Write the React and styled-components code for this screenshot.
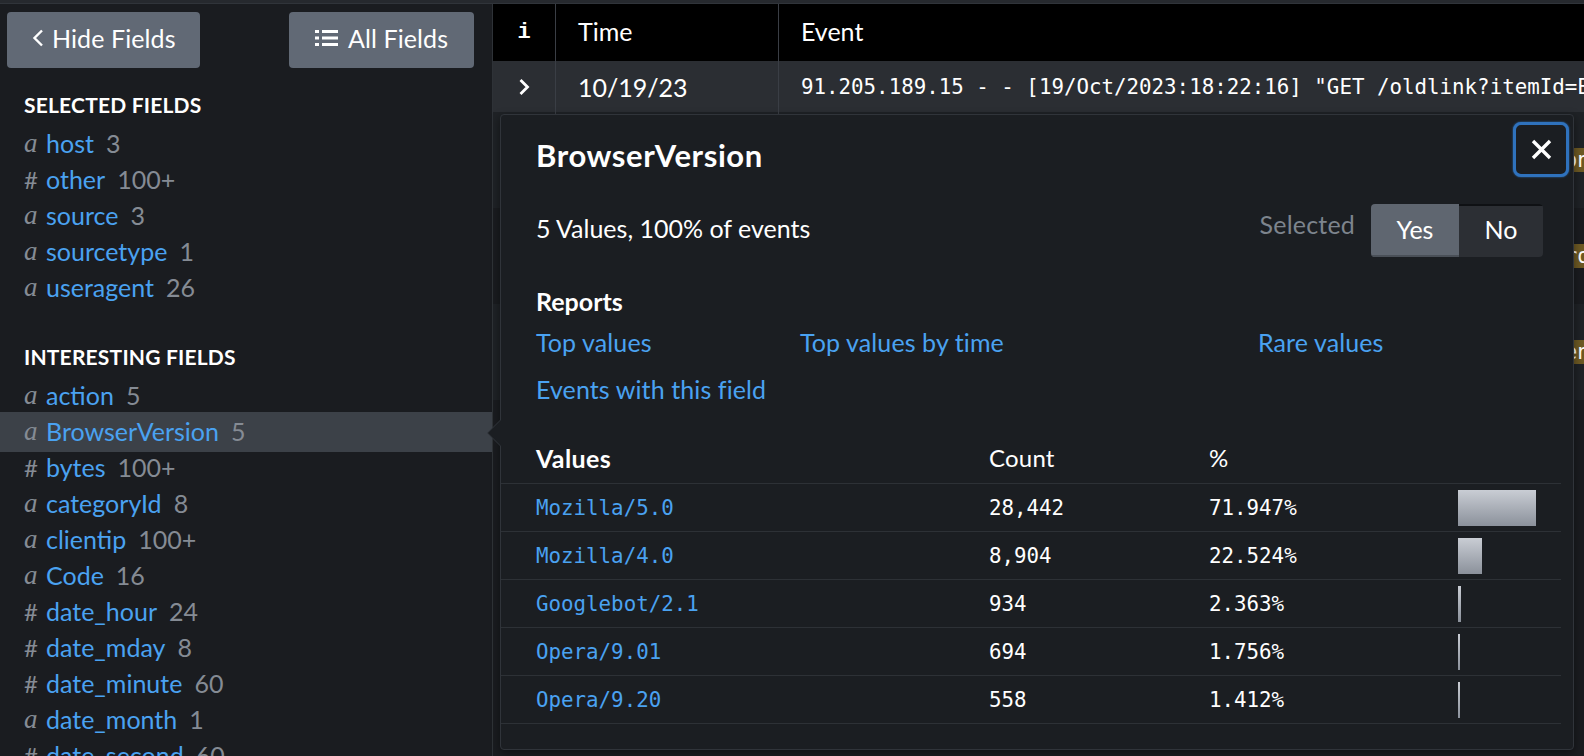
import React from "react";
import styled, { createGlobalStyle, css } from "styled-components";

const SANS = `Lato, "Open Sans", "Noto Sans", sans-serif`;
const MONO = `"DejaVu Sans Mono", "Liberation Mono", monospace`;

const GlobalStyle = createGlobalStyle`
  html, body { margin: 0; padding: 0; background: #1a1c20; }
  body { font-family: ${SANS}; color: #fff; }
  * { box-sizing: border-box; }
`;

const Page = styled.div`
  position: relative;
  width: 1584px;
  height: 756px;
  overflow: hidden;
  display: flex;
  flex-direction: column;
  background: #1a1c20;
`;

const TopStrip = styled.div`
  flex: none;
  height: 4px;
  background: #26292e;
  border-bottom: 1px solid #30343a;
`;

const Body = styled.div`
  flex: 1;
  display: flex;
  min-height: 0;
`;

/* ---------- Sidebar ---------- */
const Sidebar = styled.aside`
  flex: none;
  width: 493px;
  background: #1a1c20;
  border-right: 1px solid #2e3237;
  display: flex;
  flex-direction: column;
  overflow: hidden;
`;

const ButtonRow = styled.div`
  display: flex;
  justify-content: space-between;
  padding: 8px 18px 0 7px;
`;

const SideButton = styled.button`
  display: inline-flex;
  align-items: center;
  gap: ${(p) => p.$gap || 8}px;
  width: ${(p) => p.$w}px;
  height: 56px;
  padding: 0 0 4px ${(p) => p.$pl}px;
  border: none;
  border-radius: 4px;
  background: #616975;
  color: #fff;
  font-family: ${SANS};
  font-size: 25px;
  letter-spacing: 0.1px;
  cursor: pointer;
`;

const SectionHeading = styled.div`
  margin: ${(p) => p.$mt}px 0 8px;
  padding-left: 24px;
  height: 24px;
  line-height: 24px;
  font-size: 21px;
  font-weight: 700;
  letter-spacing: 0.2px;
  color: #fff;
`;

const FieldList = styled.div`
  display: flex;
  flex-direction: column;
`;

const FieldRow = styled.div`
  display: flex;
  align-items: center;
  height: 36px;
  padding-left: 24px;
  white-space: nowrap;
  font-size: 25px;
  ${(p) =>
    p.$active &&
    css`
      height: 40px;
      margin: -1px 0 -3px;
      padding-bottom: 2px;
      background: #3c4148;
    `}
`;

const TypeIcon = styled.span`
  display: inline-block;
  width: 22px;
  flex: none;
  color: #858b94;
  ${(p) =>
    p.$kind === "a"
      ? css`
          font-family: "Liberation Serif", "DejaVu Serif", serif;
          font-style: italic;
          font-size: 27px;
        `
      : css`
          font-family: ${SANS};
          font-size: 24px;
        `}
`;

const FieldName = styled.span`
  color: #4aa2f1;
`;

const FieldCount = styled.span`
  margin-left: 12px;
  color: #858b94;
`;

/* ---------- Main / events table ---------- */
const Main = styled.main`
  flex: 1;
  min-width: 0;
  display: flex;
  flex-direction: column;
  background: #1a1c20;
  overflow: hidden;
`;

const TableGrid = styled.div`
  display: grid;
  grid-template-columns: 63px 223px 1fr;
  flex: none;
  height: ${(p) => p.$h}px;
  background: ${(p) => p.$bg};
`;

const Cell = styled.div`
  display: flex;
  align-items: center;
  min-width: 0;
  overflow: hidden;
  white-space: nowrap;
  padding-left: ${(p) => p.$pl || 0}px;
  padding-bottom: ${(p) => p.$pb || 0}px;
  justify-content: ${(p) => (p.$center ? "center" : "flex-start")};
  border-right: ${(p) => (p.$sep ? "1px solid #3a3e45" : "none")};
  font-size: 25px;
  color: #fff;
`;

const InfoGlyph = styled.span`
  font-family: "Liberation Mono", monospace;
  font-weight: 700;
  font-size: 22px;
`;

const EventText = styled.span`
  font-family: ${MONO};
  font-size: 20.8px;
  color: #fff;
`;

const Hl = styled.span`
  background: #6e5a24;
`;

/* ---------- Popover ---------- */
const Popover = styled.section`
  position: absolute;
  left: 500px;
  top: 114px;
  width: 1074px;
  height: 636px;
  background: #1b1e22;
  border: 1px solid #30343a;
  border-radius: 4px;
  box-shadow: 0 3px 10px rgba(0, 0, 0, 0.45);

  &::before,
  &::after {
    content: "";
    position: absolute;
    top: 304px;
    width: 0;
    height: 0;
    border-style: solid;
  }
  &::before {
    left: -14px;
    border-width: 14px 14px 14px 0;
    border-color: transparent #30343a transparent transparent;
  }
  &::after {
    left: -13px;
    border-width: 14px 14px 14px 0;
    border-color: transparent #1b1e22 transparent transparent;
  }
`;

const PopHeader = styled.header`
  display: flex;
  justify-content: space-between;
  align-items: flex-start;
  padding: 7px 4px 0 35px;
`;

const Title = styled.h2`
  margin: 15px 0 0;
  font-size: 31px;
  line-height: 36px;
  font-weight: 700;
  letter-spacing: 0.6px;
  color: #fff;
`;

const CloseButton = styled.button`
  width: 56px;
  height: 55px;
  display: flex;
  align-items: center;
  justify-content: center;
  background: #1b1e22;
  border: 3px solid #2f72bd;
  border-radius: 8px;
  box-shadow: 0 0 2px #2f72bd;
  padding: 0;
  cursor: pointer;
`;

const SummaryRow = styled.div`
  display: grid;
  grid-template-columns: 722px 1fr;
  align-items: center;
  margin-top: 27px;
  padding: 0 30px 0 35px;
`;

const BodyText = styled.div`
  font-size: 25px;
  color: #fff;
  padding-bottom: 6px;
`;

const SelectedGroup = styled.div`
  display: flex;
  align-items: center;
  justify-content: flex-end;
  gap: 16px;
`;

const MutedLabel = styled.span`
  font-size: 25px;
  letter-spacing: 0.2px;
  color: #7d848d;
  margin-bottom: 14px;
`;

const Toggle = styled.div`
  display: flex;
  height: 53px;
  border-radius: 4px;
  overflow: hidden;
`;

const ToggleOption = styled.button`
  width: ${(p) => p.$w}px;
  height: 100%;
  border: none;
  padding: 0 0 3px;
  font-family: ${SANS};
  font-size: 25px;
  color: #fff;
  cursor: pointer;
  ${(p) =>
    p.$on
      ? css`
          background: #5f6670;
          box-shadow: inset 0 -2px 0 #4a5058;
        `
      : css`
          background: #2c2f34;
          box-shadow: inset 0 2px 0 #0f1114;
        `}
`;

const SubHeading = styled.h3`
  margin: 29px 0 0;
  padding-left: 35px;
  font-size: 25px;
  line-height: 30px;
  font-weight: 700;
  color: #fff;
`;

const LinkGrid = styled.div`
  display: grid;
  grid-template-columns: 264px 458px 1fr;
  grid-auto-rows: 47px;
  align-items: center;
  margin-top: 2px;
  padding-left: 35px;
`;

const Link = styled.a`
  font-size: 25px;
  letter-spacing: 0.1px;
  color: #4aa2f1;
  text-decoration: none;
  cursor: pointer;
`;

const ValuesTable = styled.div`
  margin: 24px 12px 0 0;
`;

const VRow = styled.div`
  display: grid;
  grid-template-columns: 488px 220px 249px 1fr;
  align-items: center;
  height: 48px;
  border-bottom: 1px solid #2d3136;
`;

const VHead = styled.div`
  padding-left: ${(p) => p.$pl || 0}px;
  padding-bottom: 4px;
  font-size: ${(p) => (p.$bold ? 25 : 24)}px;
  font-weight: ${(p) => (p.$bold ? 700 : 400)};
  letter-spacing: ${(p) => (p.$bold ? 0.4 : 0.2)}px;
  color: #fff;
`;

const VCell = styled.div`
  padding-left: ${(p) => p.$pl || 0}px;
  font-family: ${MONO};
  font-size: 20.8px;
  color: ${(p) => (p.$link ? "#4aa2f1" : "#fff")};
`;

const BarCell = styled.div`
  display: flex;
  align-items: center;
  height: 100%;
`;

const Bar = styled.div`
  height: 36px;
  min-width: 1px;
  background: linear-gradient(#c9cdd4, #8b919b);
`;

/* ---------- Icons ---------- */
const ChevronLeft = () => (
  <svg width="12" height="18" viewBox="0 0 12 18">
    <path d="M10 1.5 L2.5 9 L10 16.5" fill="none" stroke="#fff" strokeWidth="2.4" />
  </svg>
);

const ListIcon = () => (
  <svg width="23" height="16" viewBox="0 0 23 16">
    <rect x="0" y="0" width="4" height="3" fill="#fff" />
    <rect x="0" y="6.5" width="4" height="3" fill="#fff" />
    <rect x="0" y="13" width="4" height="3" fill="#fff" />
    <rect x="7" y="0" width="16" height="3" fill="#fff" />
    <rect x="7" y="6.5" width="16" height="3" fill="#fff" />
    <rect x="7" y="13" width="16" height="3" fill="#fff" />
  </svg>
);

const ChevronRight = () => (
  <svg width="12" height="18" viewBox="0 0 12 18">
    <path d="M2.5 2 L9.5 9 L2.5 16" fill="none" stroke="#fff" strokeWidth="2.8" />
  </svg>
);

const CloseIcon = () => (
  <svg width="21" height="21" viewBox="0 0 21 21">
    <path d="M2 2 L19 19 M19 2 L2 19" stroke="#fff" strokeWidth="3.4" />
  </svg>
);

/* ---------- Data ---------- */
const selectedFields = [
  ["a", "host", "3"],
  ["#", "other", "100+"],
  ["a", "source", "3"],
  ["a", "sourcetype", "1"],
  ["a", "useragent", "26"],
];

const interestingFields = [
  ["a", "action", "5"],
  ["a", "BrowserVersion", "5", true],
  ["#", "bytes", "100+"],
  ["a", "categoryId", "8"],
  ["a", "clientip", "100+"],
  ["a", "Code", "16"],
  ["#", "date_hour", "24"],
  ["#", "date_mday", "8"],
  ["#", "date_minute", "60"],
  ["a", "date_month", "1"],
  ["#", "date_second", "60"],
  ["a", "date_wday", "7"],
];

const values = [
  ["Mozilla/5.0", "28,442", 71.947],
  ["Mozilla/4.0", "8,904", 22.524],
  ["Googlebot/2.1", "934", 2.363],
  ["Opera/9.01", "694", 1.756],
  ["Opera/9.20", "558", 1.412],
];

const BAR_TRACK = 108;

const Field = ({ f }) => (
  <FieldRow $active={f[3]}>
    <TypeIcon $kind={f[0]}>{f[0]}</TypeIcon>
    <FieldName>{f[1]}</FieldName>
    <FieldCount>{f[2]}</FieldCount>
  </FieldRow>
);

const extraRows = [
  ["10/19/23", "182.236.164.11 - - [19/Oct/2023:18:22:14] \"POST /cart.do?action=addtocart&itemId=EST-15 HTTP 1.1\" 200 2252"],
  ["10/19/23", "198.35.1.75 - - [19/Oct/2023:18:22:11] \"GET /product.screen?productId=SF-BVS-01 HTTP 1.1\" 404 3125"],
  ["10/19/23", "211.166.11.101 - - [19/Oct/2023:18:22:09] \"GET /category.screen?categoryId=STRATEGY HTTP 1.1\" 200 1410"],
];

export default function App() {
  return (
    <Page>
      <GlobalStyle />
      <TopStrip />
      <Body>
        <Sidebar>
          <ButtonRow>
            <SideButton $w={193} $pl={25} $gap={8}>
              <ChevronLeft />
              Hide Fields
            </SideButton>
            <SideButton $w={185} $pl={26} $gap={10}>
              <ListIcon />
              All Fields
            </SideButton>
          </ButtonRow>

          <SectionHeading $mt={25}>SELECTED FIELDS</SectionHeading>
          <FieldList>
            {selectedFields.map((f) => (
              <Field key={f[1]} f={f} />
            ))}
          </FieldList>

          <SectionHeading $mt={40}>INTERESTING FIELDS</SectionHeading>
          <FieldList>
            {interestingFields.map((f) => (
              <Field key={f[1]} f={f} />
            ))}
          </FieldList>
        </Sidebar>

        <Main>
          <TableGrid $h={57} $bg="#000">
            <Cell $center $sep>
              <InfoGlyph>i</InfoGlyph>
            </Cell>
            <Cell $sep $pl={22} $pb={4}>Time</Cell>
            <Cell $pl={22} $pb={4}>Event</Cell>
          </TableGrid>
          <TableGrid $h={51} $bg="#2b2e33">
            <Cell $center $sep>
              <ChevronRight />
            </Cell>
            <Cell $sep $pl={22}>10/19/23</Cell>
            <Cell $pl={22}>
              <EventText>
                91.205.189.15 - - [19/Oct/2023:18:22:16] "GET /oldlink?itemId=EST-14&amp;JSESSIONID=SD6SL7FF7ADFF53113
              </EventText>
            </Cell>
          </TableGrid>
          {extraRows.map((r, i) => (
            <TableGrid key={i} $h={96} $bg={i % 2 ? "#1a1c20" : "#1f2226"}>
              <Cell $center $sep>
                <ChevronRight />
              </Cell>
              <Cell $sep $pl={22}>{r[0]}</Cell>
              <Cell $pl={22}>
                <EventText>
                  <Hl>{r[1]}</Hl>
                </EventText>
              </Cell>
            </TableGrid>
          ))}
        </Main>
      </Body>

      <Popover>
        <PopHeader>
          <Title>BrowserVersion</Title>
          <CloseButton aria-label="Close">
            <CloseIcon />
          </CloseButton>
        </PopHeader>

        <SummaryRow>
          <BodyText>5 Values, 100% of events</BodyText>
          <SelectedGroup>
            <MutedLabel>Selected</MutedLabel>
            <Toggle>
              <ToggleOption $on $w={88}>Yes</ToggleOption>
              <ToggleOption $w={84}>No</ToggleOption>
            </Toggle>
          </SelectedGroup>
        </SummaryRow>

        <SubHeading>Reports</SubHeading>
        <LinkGrid>
          <Link>Top values</Link>
          <Link>Top values by time</Link>
          <Link>Rare values</Link>
          <Link>Events with this field</Link>
        </LinkGrid>

        <ValuesTable>
          <VRow>
            <VHead $bold $pl={35}>Values</VHead>
            <VHead>Count</VHead>
            <VHead>%</VHead>
            <div />
          </VRow>
          {values.map(([v, c, p]) => (
            <VRow key={v}>
              <VCell $link $pl={35}>{v}</VCell>
              <VCell>{c}</VCell>
              <VCell>{p.toFixed(3)}%</VCell>
              <BarCell>
                <Bar style={{ width: `${(p / 100) * BAR_TRACK}px` }} />
              </BarCell>
            </VRow>
          ))}
        </ValuesTable>
      </Popover>
    </Page>
  );
}
